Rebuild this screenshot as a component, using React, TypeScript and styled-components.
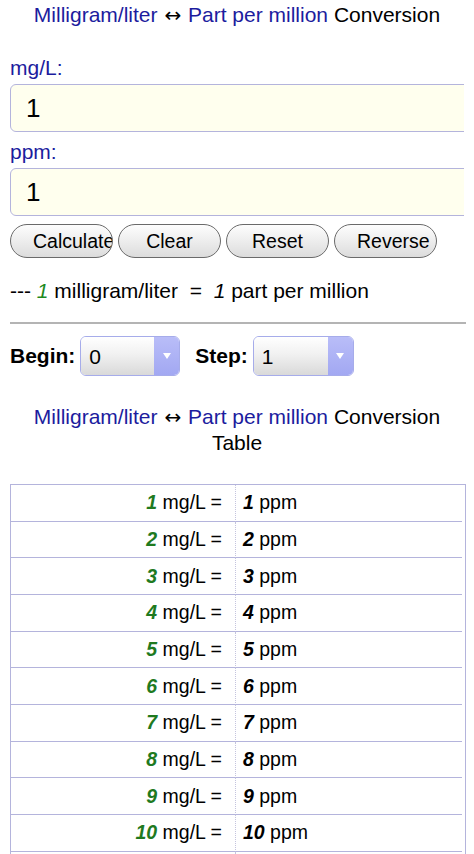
import styled, { createGlobalStyle } from 'styled-components'

const GlobalStyle = createGlobalStyle`
  body{
    margin:0;
    background:#fff;
    color:#000;
    font-family:"Liberation Sans", Arial, sans-serif;
  }
`

const BLUE = "#1c1c9e"
const LINE = "#b4b4dc"

const rows = Array.from({length:11},(_,i)=>i+1)

const App = () => {
  return (
    <Page>
      <GlobalStyle />
      <Heading>
        <Unit>Milligram/liter</Unit> <Arrow>↔</Arrow> <Unit>Part per million</Unit> Conversion
      </Heading>

      <FieldLabel $top={30}>mg/L:</FieldLabel>
      <InputClip>
        <ValueInput defaultValue="1" />
      </InputClip>

      <FieldLabel $top={9}>ppm:</FieldLabel>
      <InputClip>
        <ValueInput defaultValue="1" />
      </InputClip>

      <ButtonRow>
        <PillButton>Calculate</PillButton>
        <PillButton>Clear</PillButton>
        <PillButton>Reset</PillButton>
        <PillButton>Reverse</PillButton>
      </ButtonRow>

      <Result>
        {"--- "}<GreenNum>1</GreenNum>{" milligram/liter  =  "}<em>1</em>{" part per million"}
      </Result>

      <Divider />

      <SelectRow>
        <SelectLabel>Begin:</SelectLabel>
        <SelectBox>
          <NativeSelect defaultValue="0">
            <option>0</option>
            <option>10</option>
            <option>100</option>
          </NativeSelect>
          <ArrowPart><span /></ArrowPart>
        </SelectBox>
        <SelectLabel $left={15}>Step:</SelectLabel>
        <SelectBox $w={101}>
          <NativeSelect defaultValue="1">
            <option>1</option>
            <option>10</option>
            <option>100</option>
          </NativeSelect>
          <ArrowPart><span /></ArrowPart>
        </SelectBox>
      </SelectRow>

      <TableTitle>
        <Unit>Milligram/liter</Unit> <Arrow>↔</Arrow> <Unit>Part per million</Unit> Conversion Table
      </TableTitle>

      <Table>
        <tbody>
          {rows.map(n=>(
            <tr key={n}>
              <LeftCell><b>{n}</b> mg/L =</LeftCell>
              <RightCell><b>{n}</b> ppm</RightCell>
            </tr>
          ))}
        </tbody>
      </Table>
    </Page>
  )
}

const Page = styled.div`
  padding:3px 10px 0;
`
const Heading = styled.div`
  text-align:center;
  font-size:21px;
  line-height:24px;
`
const Unit = styled.span`
  color:${BLUE};
`
const Arrow = styled.span`
  font-family:"DejaVu Sans", sans-serif;
  font-size:20px;
  margin:0 1px;
`
const FieldLabel = styled.div<{$top:number}>`
  color:${BLUE};
  font-size:21px;
  line-height:22px;
  margin-top:${p=>p.$top}px;
  margin-bottom:5px;
`
const InputClip = styled.div`
  overflow:hidden;
  height:48px;
`
const ValueInput = styled.input`
  box-sizing:border-box;
  width:calc(100% + 20px);
  height:48px;
  border:1.5px solid ${LINE};
  border-radius:6px;
  background:#ffffee;
  font-family:inherit;
  font-size:26px;
  color:#000;
  padding:0 0 0 15px;
  outline:none;
`
const ButtonRow = styled.div`
  display:flex;
  gap:5px;
  margin-top:8px;
`
const PillButton = styled.button`
  box-sizing:border-box;
  width:103px;
  height:34px;
  padding:0 22px;
  border:1px solid #6a6a6a;
  border-radius:17px;
  background:linear-gradient(#fdfdfd, #ededed 50%, #dcdcdc);
  font-family:inherit;
  font-size:19.5px;
  color:#000;
  white-space:nowrap;
  overflow:hidden;
  text-align:center;
`
const Result = styled.div`
  margin-top:22px;
  font-size:21px;
  line-height:22px;
  white-space:pre;
  em{
    font-style:italic;
  }
`
const GreenNum = styled.em`
  color:#1f8a1f;
`
const Divider = styled.hr`
  border:none;
  height:2px;
  background:#b4b4b4;
  margin:20px -2px 0 0;
`
const SelectRow = styled.div`
  display:flex;
  align-items:center;
  margin-top:12px;
`
const SelectLabel = styled.span<{$left?:number}>`
  font-weight:bold;
  font-size:21px;
  margin-left:${p=>p.$left||0}px;
  margin-right:5px;
`
const SelectBox = styled.div<{$w?:number}>`
  box-sizing:border-box;
  display:flex;
  width:${p=>p.$w||100}px;
  height:40px;
  border:1px solid #a6acea;
  border-radius:6px;
  overflow:hidden;
`
const NativeSelect = styled.select`
  flex:1;
  min-width:0;
  appearance:none;
  -webkit-appearance:none;
  border:none;
  border-radius:0;
  outline:none;
  background:linear-gradient(#ffffff, #f1f1f1 45%, #d9d9d9);
  font-family:inherit;
  font-size:21px;
  color:#000;
  padding:0 0 0 8px;
`
const ArrowPart = styled.div`
  width:25px;
  display:flex;
  align-items:center;
  justify-content:center;
  background:linear-gradient(#b9bdf8, #a2a8f2);
  span{
    width:0;
    height:0;
    border-left:4px solid transparent;
    border-right:4px solid transparent;
    border-top:6px solid #fff;
  }
`
const TableTitle = styled.div`
  margin-top:28px;
  text-align:center;
  font-size:21px;
  line-height:26px;
`
const Table = styled.table`
  margin-top:28px;
  width:calc(100% + 2px);
  border:1px solid ${LINE};
  border-spacing:0;
  padding-right:3px;
  font-size:19.5px;
`
const LeftCell = styled.td`
  box-sizing:border-box;
  width:225px;
  height:36.67px;
  padding:0 13px 0 0;
  text-align:right;
  border-bottom:1px solid ${LINE};
  border-right:1px dotted #c4c4de;
  b{
    color:#1f7a1f;
    font-style:italic;
  }
`
const RightCell = styled.td`
  box-sizing:border-box;
  height:36.67px;
  padding:0 0 0 7px;
  border-bottom:1px solid ${LINE};
  b{
    font-style:italic;
  }
`

export default App
